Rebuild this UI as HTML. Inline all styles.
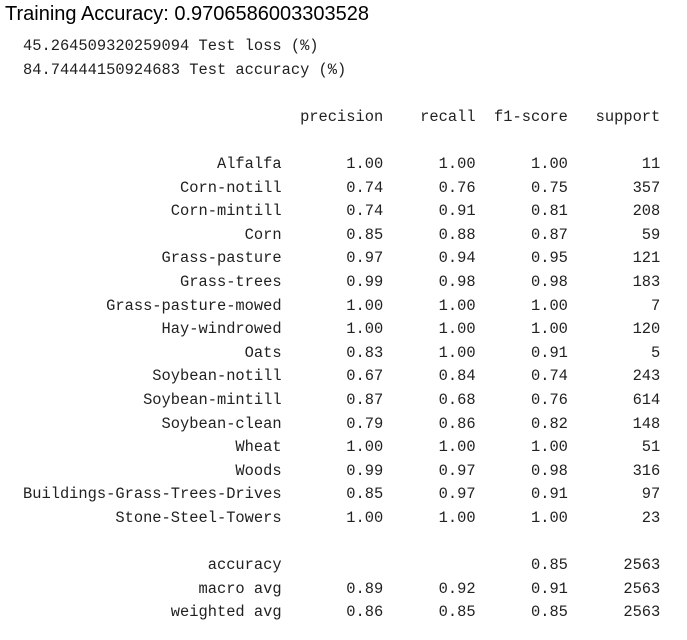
<!DOCTYPE html>
<html><head><meta charset="utf-8"><style>
body{margin:0;background:#fff;width:687px;height:640px;overflow:hidden}
.t{position:absolute;left:5px;top:3px;font:20px "Liberation Sans",sans-serif;color:#000;white-space:nowrap}
pre{position:absolute;left:23px;top:35px;margin:0;font:15.4px/23.6px "Liberation Mono",monospace;color:#212121}
</style></head><body>
<div class="t">Training Accuracy: 0.9706586003303528</div>
<pre>45.264509320259094 Test loss (%)
84.74444150924683 Test accuracy (%)

                              precision    recall  f1-score   support

                     Alfalfa       1.00      1.00      1.00        11
                 Corn-notill       0.74      0.76      0.75       357
                Corn-mintill       0.74      0.91      0.81       208
                        Corn       0.85      0.88      0.87        59
               Grass-pasture       0.97      0.94      0.95       121
                 Grass-trees       0.99      0.98      0.98       183
         Grass-pasture-mowed       1.00      1.00      1.00         7
               Hay-windrowed       1.00      1.00      1.00       120
                        Oats       0.83      1.00      0.91         5
              Soybean-notill       0.67      0.84      0.74       243
             Soybean-mintill       0.87      0.68      0.76       614
               Soybean-clean       0.79      0.86      0.82       148
                       Wheat       1.00      1.00      1.00        51
                       Woods       0.99      0.97      0.98       316
Buildings-Grass-Trees-Drives       0.85      0.97      0.91        97
          Stone-Steel-Towers       1.00      1.00      1.00        23

                    accuracy                           0.85      2563
                   macro avg       0.89      0.92      0.91      2563
                weighted avg       0.86      0.85      0.85      2563</pre>
</body></html>
